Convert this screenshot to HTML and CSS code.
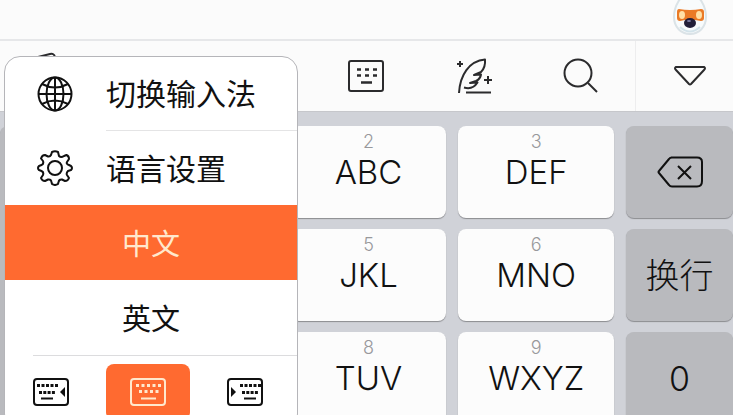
FILE: index.html
```html
<!DOCTYPE html>
<html lang="zh-CN">
<head>
    <meta charset="utf-8">
    <title>输入法键盘</title>
    <link rel="stylesheet" href="styles.css">
</head>
<body>
    <div class="app">
        <header class="topbar">
            <svg class="mascot" width="34" height="42" viewBox="0 0 34 42">
                <path d="M17 1C27 1 33 14 33 24C33 34 26 41 17 41S1 34 1 24C1 14 7 1 17 1Z" fill="#f8fbfc" stroke="#dbe3e7" stroke-width="2"/>
                <path d="M7 34Q17 43 27 34" fill="none" stroke="#d3e3ea" stroke-width="2"/>
                <path d="M11 4H22L18 6H14Z" fill="#e9b7a3"/>
                <path d="M6 16Q17 18 28 16Q31 16 31 19V25Q31 28 28 28L22 27H12L7 28Q4 28 4 25V19Q4 16 6 16Z" fill="#ea7a26"/>
                <ellipse cx="9" cy="22" rx="3" ry="4" fill="#ffe0a6"/>
                <ellipse cx="26" cy="22" rx="3" ry="4" fill="#ffe0a6"/>
                <ellipse cx="17" cy="30" rx="6" ry="5" fill="#211e38"/>
                <ellipse cx="16" cy="28" rx="2" ry="1" fill="#7c7ca4"/>
            </svg>
        </header>

        <nav class="toolbar">
            <button class="tool" aria-label="剪贴板">
                <svg width="36" height="50" viewBox="0 0 36 50"><path d="M3 44V7L19 3Q23 2 24 6L27 38Z"/></svg>
            </button>
            <button class="tool" aria-label="表情"></button>
            <button class="tool" aria-label="语音"></button>
            <button class="tool" aria-label="键盘">
                <svg width="36" height="32" viewBox="0 0 36 32">
                    <rect x="1" y="1" width="34" height="30" rx="2"/>
                    <path d="M9 9.500h4m4 0h4m4 0h4M9 15.500h4m4 0h4m4 0h4M13 22.500h11" stroke-width="2.600"/>
                </svg>
            </button>
            <button class="tool" aria-label="手写">
                <svg width="36" height="36" viewBox="0 0 36 36">
                    <path d="M3 35C4 17 13 3 29 1.500C29.500 7 28 11 25 14L18 17L25 16.500C24.500 20 22 22 20 23L14 25L21.500 24.500C18 30 13 31 8 29.500M10 34.500h25M4 3v6M1 6h6M32 18v8M28 22h8"/>
                </svg>
            </button>
            <button class="tool" aria-label="搜索">
                <svg width="36" height="36" viewBox="0 0 36 36"><circle cx="15" cy="15" r="13.500"/><path d="M25 25l9 9"/></svg>
            </button>
            <button class="tool tool-close" aria-label="收起">
                <svg width="34" height="22" viewBox="0 0 34 22"><path d="M3 2H31Q33 3 31 5L18 19Q17 20 16 19L3 5Q1 3 3 2Z"/></svg>
            </button>
        </nav>

        <main class="keypad">
            <button class="key key-side key-list" aria-label="标点"></button>
            <button class="key" aria-label="分词"></button>
            <button class="key"><span class="digit">2</span>ABC</button>
            <button class="key"><span class="digit">3</span>DEF</button>
            <button class="key key-side" aria-label="删除">
                <svg width="46" height="32" viewBox="0 0 46 32">
                    <path d="M14 1.500H40Q45 1.500 45 6V25Q45 30.500 40 30.500H15Q13 30.500 12 29L2 17Q1 16 2 15L12 3Q13 1.500 15 1.500M21 10l13 13M34 10l-13 13"/>
                </svg>
            </button>

            <button class="key"><span class="digit">4</span>GHI</button>
            <button class="key"><span class="digit">5</span>JKL</button>
            <button class="key"><span class="digit">6</span>MNO</button>
            <button class="key key-side">换行</button>

            <button class="key"><span class="digit">7</span>PQRS</button>
            <button class="key"><span class="digit">8</span>TUV</button>
            <button class="key"><span class="digit">9</span>WXYZ</button>
            <button class="key key-side">0</button>
        </main>

        <div class="menu">
            <button class="menu-item">
                <svg class="menu-icon" width="36" height="36" viewBox="0 0 36 36">
                    <circle cx="18" cy="18" r="16.500"/>
                    <ellipse cx="18" cy="18" rx="8.500" ry="16.500"/>
                    <path d="M18 1V35M1 18H35M5 8Q18 15 31 8M5 28Q18 21 31 28"/>
                </svg>
                <span class="menu-label menu-label-line">切换输入法</span>
            </button>
            <button class="menu-item">
                <svg class="menu-icon" width="36" height="36" viewBox="0 0 36 36">
                    <path d="M15 2Q18 .5 21 2L22 6Q24 8 27 6L29.500 5Q32 6 32 9L30 12Q29 14 32 15L34 16Q36 18 34 20L31 21Q29 23 30 25L32 28Q31 31 28 31L25 29.500Q22 29 21.500 32L21 34Q18 36 15 34L14.500 32Q14 29 11 29.500L8 31Q5 31 4 28L6 25Q7 22 4.500 21L2 20Q0 18 2 16L4.500 15Q7 14 6 11L4 8.500Q5 5 8 5L11 6.500Q13 7 14 5Z"/>
                    <circle cx="18" cy="18" r="7"/>
                </svg>
                <span class="menu-label">语言设置</span>
            </button>
            <button class="menu-item menu-lang active">中文</button>
            <button class="menu-item menu-lang">英文</button>
            <div class="layouts">
                <button class="layout" aria-label="左手键盘">
                    <svg width="38" height="30" viewBox="0 0 38 30">
                        <rect x="2" y="2" width="34" height="26" rx="3"/>
                        <path d="M5 8.500h21" stroke-width="3" stroke-dasharray="3 1.500"/>
                        <path d="M7 15.500h16" stroke-width="3" stroke-dasharray="3 1.300"/>
                        <path d="M9 21.500h12"/>
                        <path class="arrow" d="M28 15l5-5v10z"/>
                    </svg>
                </button>
                <button class="layout active" aria-label="标准键盘">
                    <svg width="38" height="30" viewBox="0 0 38 30">
                        <rect x="2" y="2" width="34" height="26" rx="3"/>
                        <path d="M7 8.500h25" stroke-width="3" stroke-dasharray="3 2.500"/>
                        <path d="M10 14.500h20" stroke-width="3" stroke-dasharray="3 2.500"/>
                        <path d="M12 21.500h15"/>
                    </svg>
                </button>
                <button class="layout" aria-label="右手键盘">
                    <svg width="38" height="30" viewBox="0 0 38 30">
                        <rect x="2" y="2" width="34" height="26" rx="3"/>
                        <path d="M14 8.500h21" stroke-width="3" stroke-dasharray="3 1.500"/>
                        <path d="M16 15.500h16" stroke-width="3" stroke-dasharray="3 1.300"/>
                        <path d="M18 21.500h12"/>
                        <path class="arrow" d="M10 15l-5-5v10z"/>
                    </svg>
                </button>
            </div>
        </div>
    </div>
</body>
</html>
```
FILE: styles.css
```css
html, body {
    margin: 0;
    padding: 0;
    height: 100%;
}

body {
    font-family: Inter, "Noto Sans CJK SC", sans-serif;
    font-weight: 300;
    color: #111;
    background: #d0d2d8;
    overflow: hidden;
}

button {
    margin: 0;
    padding: 0;
    border: 0;
    background: none;
    color: inherit;
    font: inherit;
}

svg {
    display: block;
    fill: none;
    stroke: currentColor;
    stroke-width: 2;
    stroke-linecap: butt;
    stroke-linejoin: round;
}

.app {
    position: relative;
    height: 100%;
    overflow: hidden;
}

.topbar {
    box-sizing: border-box;
    display: flex;
    justify-content: flex-end;
    align-items: flex-end;
    height: 41px;
    padding: 0 26px 4px;
    background: #fbfbfb;
    border-bottom: 2px solid #e6e7e9;
}

.mascot {
    stroke: none;
}

.toolbar {
    display: grid;
    grid-template-columns: 98fr repeat(5, 107fr) 98fr;
    height: 70px;
    background: #fbfbfb;
    border-bottom: 1px solid #c6c7cb;
}

.tool {
    display: flex;
    align-items: center;
    justify-content: center;
    color: #2b2b2d;
}

.tool-close {
    padding-left: 12px;
    border-left: 1px solid #ededee;
}

.keypad {
    display: grid;
    grid-template-columns: 111fr repeat(3, 156fr) 107fr;
    grid-auto-rows: 92px;
    column-gap: 12px;
    row-gap: 11px;
    padding-top: 14px;
}

.key {
    box-sizing: border-box;
    display: flex;
    flex-direction: column;
    align-items: center;
    padding-top: 6px;
    border-radius: 8px;
    background: #fcfcfc;
    box-shadow: 0 1px 1px #8b8c90;
    font-size: 33px;
    line-height: 41px;
}

.key-side {
    justify-content: center;
    padding-top: 0;
    background: #b9babe;
    font-size: 34px;
}

.key-list {
    grid-row: span 3;
}

.digit {
    font-size: 18px;
    line-height: 20px;
    color: #98989b;
}

.menu {
    box-sizing: border-box;
    position: absolute;
    top: 56px;
    left: 4px;
    width: 40%;
    min-width: 294px;
    border: 1px solid #b5b5b9;
    border-radius: 16px;
    background: #fff;
    overflow: hidden;
}

.menu-item {
    display: flex;
    align-items: center;
    width: 100%;
    height: 74px;
    font-family: "Noto Sans CJK SC", sans-serif;
    font-size: 30px;
    font-weight: 400;
    line-height: 41px;
}

.menu-icon {
    flex: none;
    margin: 0 33px 0 32px;
}

.menu-label {
    flex: 1;
    padding: 15px 0 17px;
    text-align: left;
}

.menu-label-line {
    border-bottom: 1px solid #e4e4e5;
}

.menu-lang {
    justify-content: center;
    height: 75px;
    font-size: 29px;
}

.menu .active {
    background: #ff6a30;
    color: #ffe8cd;
}

.layouts {
    display: flex;
    justify-content: center;
    gap: 13px;
    padding: 9px 7px 9px 0;
    background: linear-gradient(#dcdcde, #dcdcde) 28px 0 / 100% 1px no-repeat;
}

.layout {
    display: flex;
    flex: none;
    align-items: center;
    justify-content: center;
    width: 84px;
    height: 56px;
    border-radius: 8px;
}

.arrow {
    fill: currentColor;
    stroke: none;
}
```
